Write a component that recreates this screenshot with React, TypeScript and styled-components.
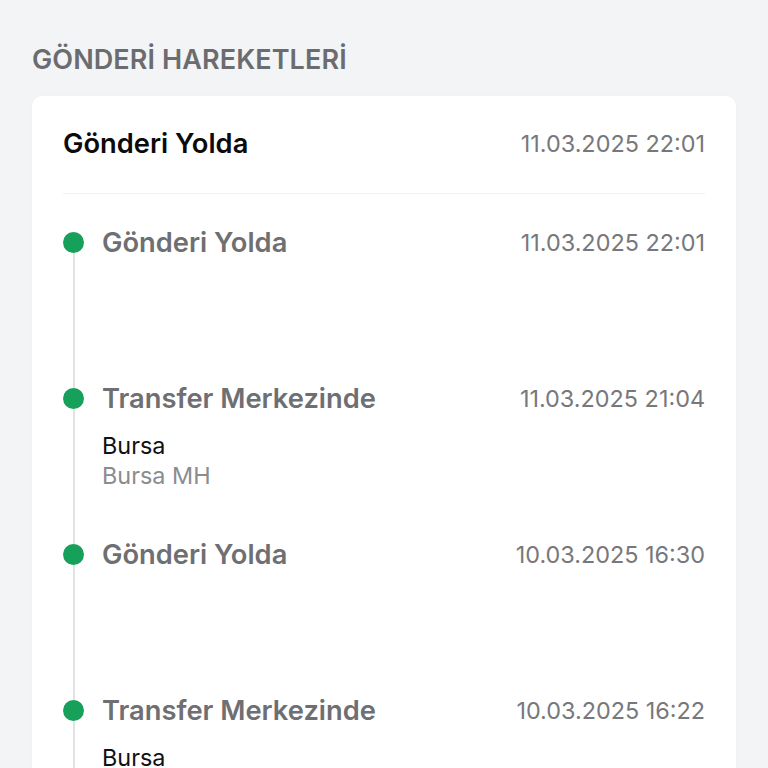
import React from "react";
import styled, { createGlobalStyle } from "styled-components";

const Global = createGlobalStyle`
  html, body { margin: 0; padding: 0; background: #f3f4f6; }
  body { font-family: Inter, "Noto Sans", "Liberation Sans", sans-serif; -webkit-font-smoothing: antialiased; }
  * { box-sizing: border-box; }
`;

const Page = styled.div`
  width: 768px;
  height: 768px;
  overflow: hidden;
  background: #f3f4f6;
  display: flex;
  flex-direction: column;
`;

const PrevCardEdge = styled.div`
  margin: 0 0 0 27px;
  width: 350px;
  height: 3px;
  background: #eeeff1;
  box-shadow: 0 1px 2px rgba(0, 0, 0, 0.04);
  border-radius: 0 0 6px 6px;
`;

const SectionTitle = styled.h2`
  margin: 43px 0 0 32px;
  font-size: 27px;
  line-height: 34px;
  font-weight: 600;
  color: #6b6c70;
  letter-spacing: 0.1px;
`;

const Card = styled.section`
  margin: 19px 32px 0 32px;
  background: #ffffff;
  border-radius: 10px;
  padding: 0 31px 0 31px;
  box-shadow: 0 0 2px rgba(0, 0, 0, 0.04);
  flex: 1;
`;

const CardHeader = styled.div`
  height: 98px;
  padding-bottom: 2px;
  display: flex;
  align-items: center;
  justify-content: space-between;
  border-bottom: 1px solid #f1f1f3;
`;

const HeaderTitle = styled.div`
  font-size: 27.3px;
  font-weight: 600;
  color: #0b0b0c;
`;

const DateText = styled.div`
  font-size: 23.4px;
  font-weight: 400;
  color: #77787c;
`;

const Timeline = styled.div`
  padding-top: 38px;
`;

const Item = styled.div`
  display: grid;
  grid-template-columns: 21px 1fr;
  column-gap: 18px;
  height: 156px;
`;

const Rail = styled.div`
  display: flex;
  flex-direction: column;
  align-items: center;
`;

const Dot = styled.div`
  width: 21px;
  height: 21px;
  border-radius: 50%;
  background: #16a05a;
  flex: none;
`;

const Line = styled.div`
  width: 2px;
  flex: 1;
  background: #e2e2e4;
`;

const Body = styled.div`
  display: flex;
  flex-direction: column;
`;

const TitleRow = styled.div`
  height: 21px;
  display: flex;
  align-items: center;
  justify-content: space-between;
`;

const ItemTitle = styled.div`
  font-size: 27.3px;
  font-weight: 600;
  color: #6e6f73;
`;

const Details = styled.div`
  margin-top: 22px;
  display: flex;
  flex-direction: column;
`;

const Place = styled.div<{ $muted?: boolean }>`
  font-size: 23.4px;
  line-height: 30px;
  color: ${(p) => (p.$muted ? "#8b8c90" : "#111113")};
`;

type Ev = { title: string; date: string; city?: string; hub?: string };

const events: Ev[] = [
  { title: "Gönderi Yolda", date: "11.03.2025 22:01" },
  { title: "Transfer Merkezinde", date: "11.03.2025 21:04", city: "Bursa", hub: "Bursa MH" },
  { title: "Gönderi Yolda", date: "10.03.2025 16:30" },
  { title: "Transfer Merkezinde", date: "10.03.2025 16:22", city: "Bursa", hub: "Bursa MH" },
];

export default function App() {
  return (
    <Page>
      <Global />
      <PrevCardEdge />
      <SectionTitle>GÖNDERİ HAREKETLERİ</SectionTitle>
      <Card>
        <CardHeader>
          <HeaderTitle>Gönderi Yolda</HeaderTitle>
          <DateText>11.03.2025 22:01</DateText>
        </CardHeader>
        <Timeline>
          {events.map((e, i) => (
            <Item key={i}>
              <Rail>
                <Dot />
                <Line />
              </Rail>
              <Body>
                <TitleRow>
                  <ItemTitle>{e.title}</ItemTitle>
                  <DateText>{e.date}</DateText>
                </TitleRow>
                {e.city && (
                  <Details>
                    <Place>{e.city}</Place>
                    <Place $muted>{e.hub}</Place>
                  </Details>
                )}
              </Body>
            </Item>
          ))}
        </Timeline>
      </Card>
    </Page>
  );
}
